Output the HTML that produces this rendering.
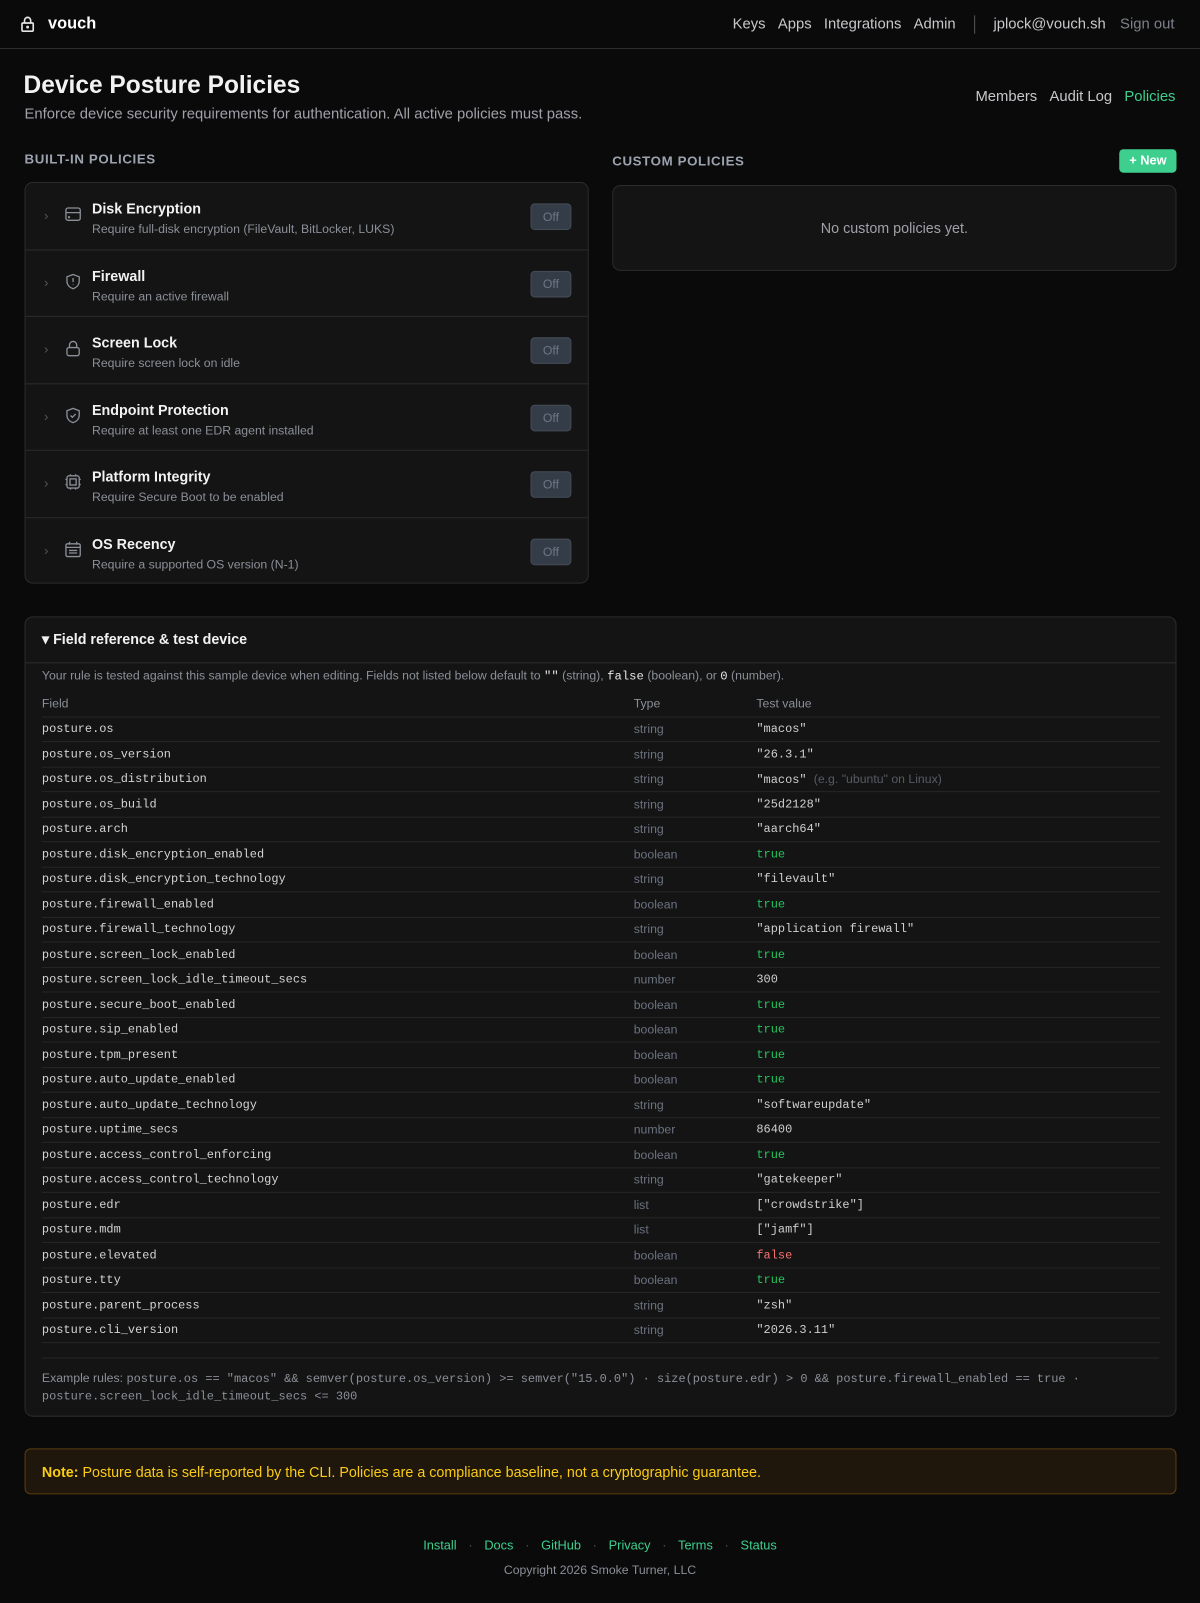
<!DOCTYPE html>
<html><head><meta charset="utf-8"><style>
*{box-sizing:border-box;margin:0;padding:0}
html,body{width:1200px;height:1603px;background:#0a0a0a;overflow:hidden}
#w{width:1174px;height:1568px;position:relative;transform:scale(1.02215);transform-origin:0 0;color:#e5e5e5;font-family:"Liberation Sans",sans-serif}
.abs{position:absolute}
.hdr{left:0;top:0;width:1174px;height:48px;border-bottom:1px solid #2e2e2e}
.nav a{color:#c8c8cc;text-decoration:none;font-size:14.5px}
.card{background:#141414;border:1px solid #2c2c2c;border-radius:8px}
.sec{font-size:13px;font-weight:bold;letter-spacing:.6px;color:#9ca3af}
.row{position:relative;height:65.5px;border-bottom:1px solid #2c2c2c}
.row:last-child{border-bottom:none}
.row .t{position:absolute;left:65px;top:17px;font-size:14px;font-weight:bold;color:#f2f2f2}
.row .d{position:absolute;left:65px;top:38px;font-size:12px;color:#8b8f98}
.row .chev{position:absolute;left:18px;top:24px;color:#555;font-size:13px}
.row svg{position:absolute;left:38px;top:22px}
.off{position:absolute;right:16px;top:20px;width:40px;height:26px;background:#343c48;border:1px solid #444c58;border-radius:4px;color:#6f7785;font-size:12px;text-align:center;line-height:24px}
table{border-collapse:collapse;width:1094px;margin-left:16px}
td,th{height:24.5px;border-bottom:1px solid #262626;text-align:left;font-weight:normal;padding:0}
th{font-size:12px;color:#8b8f98;height:26px}
td{font-family:"Liberation Mono",monospace;font-size:11.7px;color:#d4d4d4}
td.ty{font-family:"Liberation Sans",sans-serif;font-size:12px;color:#6b7280}
td.v{color:#cfcfcf}
td.g{color:#22c55e}td.r{color:#f87171}
.m{font-family:"Liberation Mono",monospace}
</style></head><body><div id="w">
<div class="abs hdr">
<svg class="abs" style="left:20px;top:15px" width="14" height="17" viewBox="0 0 14 17" fill="none" stroke="#e5e5e5" stroke-width="1.6"><rect x="1.5" y="7.5" width="11" height="8" rx="1"/><path d="M4 7.5V5a3 3 0 0 1 6 0v2.5"/><circle cx="7" cy="11.5" r=".6" fill="#e5e5e5"/></svg>
<div class="abs" style="left:47px;top:15px;font-size:16px;font-weight:bold;color:#fff">vouch</div>
<div class="abs nav" style="right:25px;top:15px;display:flex;gap:12px;align-items:center">
<a>Keys</a><a>Apps</a><a>Integrations</a><a>Admin</a><span style="width:1px;height:18px;background:#555;margin:0 6px"></span><a>jplock@vouch.sh</a><a style="color:#7d818a;margin-left:2px">Sign out</a></div>
</div>
<div class="abs" style="left:23px;top:70px;font-size:24px;font-weight:bold;color:#f2f2f2">Device Posture Policies</div>
<div class="abs" style="left:24px;top:104px;font-size:14.5px;color:#a1a1aa">Enforce device security requirements for authentication. All active policies must pass.</div>
<div class="abs nav" style="right:24px;top:87px;display:flex;gap:12px"><a>Members</a><a>Audit Log</a><a style="color:#3ecf8e">Policies</a></div>
<div class="abs sec" style="left:24px;top:148px">BUILT-IN POLICIES</div>
<div class="abs card" style="left:24px;top:178px;width:552px;height:393px">
<div class="row"><span class="chev">›</span><svg width="17" height="17" viewBox="0 0 17 17" fill="none" stroke="#8b8f98" stroke-width="1.3"><rect x="1.5" y="2.5" width="14" height="12" rx="2"/><path d="M1.5 7h14"/><circle cx="4.5" cy="11.5" r=".5"/></svg><div class="t">Disk Encryption</div><div class="d">Require full-disk encryption (FileVault, BitLocker, LUKS)</div><div class="off">Off</div></div>
<div class="row"><span class="chev">›</span><svg width="17" height="17" viewBox="0 0 17 17" fill="none" stroke="#8b8f98" stroke-width="1.3"><path d="M8.5 1.5l6 2.3v4.4c0 3.6-2.6 6.2-6 7.3-3.4-1.1-6-3.7-6-7.3V3.8z"/><path d="M8.5 5v4M8.5 11v.5"/></svg><div class="t">Firewall</div><div class="d">Require an active firewall</div><div class="off">Off</div></div>
<div class="row"><span class="chev">›</span><svg width="17" height="17" viewBox="0 0 17 17" fill="none" stroke="#8b8f98" stroke-width="1.3"><rect x="2.5" y="8" width="12" height="8" rx="2"/><path d="M5 8V5.5a3.5 3.5 0 0 1 7 0V8"/></svg><div class="t">Screen Lock</div><div class="d">Require screen lock on idle</div><div class="off">Off</div></div>
<div class="row"><span class="chev">›</span><svg width="17" height="17" viewBox="0 0 17 17" fill="none" stroke="#8b8f98" stroke-width="1.3"><path d="M8.5 1.5l6 2.3v4.4c0 3.6-2.6 6.2-6 7.3-3.4-1.1-6-3.7-6-7.3V3.8z"/><path d="M6 8.5l1.8 1.8L11 7"/></svg><div class="t">Endpoint Protection</div><div class="d">Require at least one EDR agent installed</div><div class="off">Off</div></div>
<div class="row"><span class="chev">›</span><svg width="17" height="17" viewBox="0 0 17 17" fill="none" stroke="#8b8f98" stroke-width="1.3"><rect x="2.5" y="2.5" width="12" height="12" rx="2"/><rect x="5.5" y="5.5" width="6" height="6"/><path d="M1 6h1.5M1 11h1.5M14.5 6H16M14.5 11H16M6 1v1.5M11 1v1.5M6 14.5V16M11 14.5V16"/></svg><div class="t">Platform Integrity</div><div class="d">Require Secure Boot to be enabled</div><div class="off">Off</div></div>
<div class="row"><span class="chev">›</span><svg width="17" height="17" viewBox="0 0 17 17" fill="none" stroke="#8b8f98" stroke-width="1.3"><rect x="1.5" y="3" width="14" height="12.5" rx="1.5"/><path d="M1.5 6.5h14M5 1v3M12 1v3M4.5 9.5h8M4.5 12h8"/></svg><div class="t">OS Recency</div><div class="d">Require a supported OS version (N-1)</div><div class="off">Off</div></div>
</div>
<div class="abs sec" style="left:599px;top:150px">CUSTOM POLICIES</div>
<div class="abs" style="left:1095px;top:146px;width:56px;height:23px;background:#3ecf8e;border-radius:4px;color:#fff;font-size:12.5px;font-weight:bold;text-align:center;line-height:23px">+ New</div>
<div class="abs card" style="left:599px;top:181px;width:552px;height:84px;text-align:center;line-height:82px;font-size:14px;color:#a1a1aa">No custom policies yet.</div>
<div class="abs card" style="left:24px;top:603px;width:1127px;height:783px">
<div style="height:45px;border-bottom:1px solid #2c2c2c;padding:13px 0 0 16px;font-size:14px;font-weight:bold;color:#f2f2f2">▾ Field reference &amp; test device</div>
<div style="padding:5px 16px 0;font-size:12px;color:#8b8f98;height:26px">Your rule is tested against this sample device when editing. Fields not listed below default to <span class="m" style="color:#e5e5e5">""</span> (string), <span class="m" style="color:#e5e5e5">false</span> (boolean), or <span class="m" style="color:#e5e5e5">0</span> (number).</div>
<table>
<tr><th style="width:579px">Field</th><th style="width:120px">Type</th><th>Test value</th></tr>
<tr><td>posture.os</td><td class="ty">string</td><td class="v">"macos"</td></tr>
<tr><td>posture.os_version</td><td class="ty">string</td><td class="v">"26.3.1"</td></tr>
<tr><td>posture.os_distribution</td><td class="ty">string</td><td class="v">"macos" <span style="font-family:'Liberation Sans',sans-serif;font-size:12px;color:#555b66">(e.g. "ubuntu" on Linux)</span></td></tr>
<tr><td>posture.os_build</td><td class="ty">string</td><td class="v">"25d2128"</td></tr>
<tr><td>posture.arch</td><td class="ty">string</td><td class="v">"aarch64"</td></tr>
<tr><td>posture.disk_encryption_enabled</td><td class="ty">boolean</td><td class="g">true</td></tr>
<tr><td>posture.disk_encryption_technology</td><td class="ty">string</td><td class="v">"filevault"</td></tr>
<tr><td>posture.firewall_enabled</td><td class="ty">boolean</td><td class="g">true</td></tr>
<tr><td>posture.firewall_technology</td><td class="ty">string</td><td class="v">"application firewall"</td></tr>
<tr><td>posture.screen_lock_enabled</td><td class="ty">boolean</td><td class="g">true</td></tr>
<tr><td>posture.screen_lock_idle_timeout_secs</td><td class="ty">number</td><td class="v">300</td></tr>
<tr><td>posture.secure_boot_enabled</td><td class="ty">boolean</td><td class="g">true</td></tr>
<tr><td>posture.sip_enabled</td><td class="ty">boolean</td><td class="g">true</td></tr>
<tr><td>posture.tpm_present</td><td class="ty">boolean</td><td class="g">true</td></tr>
<tr><td>posture.auto_update_enabled</td><td class="ty">boolean</td><td class="g">true</td></tr>
<tr><td>posture.auto_update_technology</td><td class="ty">string</td><td class="v">"softwareupdate"</td></tr>
<tr><td>posture.uptime_secs</td><td class="ty">number</td><td class="v">86400</td></tr>
<tr><td>posture.access_control_enforcing</td><td class="ty">boolean</td><td class="g">true</td></tr>
<tr><td>posture.access_control_technology</td><td class="ty">string</td><td class="v">"gatekeeper"</td></tr>
<tr><td>posture.edr</td><td class="ty">list</td><td class="v">["crowdstrike"]</td></tr>
<tr><td>posture.mdm</td><td class="ty">list</td><td class="v">["jamf"]</td></tr>
<tr><td>posture.elevated</td><td class="ty">boolean</td><td class="r">false</td></tr>
<tr><td>posture.tty</td><td class="ty">boolean</td><td class="g">true</td></tr>
<tr><td>posture.parent_process</td><td class="ty">string</td><td class="v">"zsh"</td></tr>
<tr><td>posture.cli_version</td><td class="ty">string</td><td class="v">"2026.3.11"</td></tr>
<tr><td colspan="3" style="border-bottom:none;height:14px"></td></tr>
</table>
<div style="margin:0 16px;border-top:1px solid #262626;padding-top:11px;font-size:12px;line-height:16px;color:#8b8f98">Example rules: <span class="m" style="font-size:11.7px">posture.os == "macos" &amp;&amp; semver(posture.os_version) &gt;= semver("15.0.0") · size(posture.edr) &gt; 0 &amp;&amp; posture.firewall_enabled == true · posture.screen_lock_idle_timeout_secs &lt;= 300</span></div>
</div>
<div class="abs" style="left:24px;top:1417px;width:1127px;height:45px;background:#1f170c;border:1px solid #5c3d10;border-radius:6px;padding:14px 16px 0;font-size:14px;color:#facc15"><b>Note:</b> Posture data is self-reported by the CLI. Policies are a compliance baseline, not a cryptographic guarantee.</div>
<div class="abs" style="left:0;width:1174px;top:1505px;text-align:center;font-size:12.5px;color:#3ecf8e">Install <span style="color:#555;margin:0 8px">·</span> Docs <span style="color:#555;margin:0 8px">·</span> GitHub <span style="color:#555;margin:0 8px">·</span> Privacy <span style="color:#555;margin:0 8px">·</span> Terms <span style="color:#555;margin:0 8px">·</span> Status</div>
<div class="abs" style="left:0;width:1174px;top:1529px;text-align:center;font-size:12px;color:#8b8f98">Copyright 2026 Smoke Turner, LLC</div>
</div></body></html>
